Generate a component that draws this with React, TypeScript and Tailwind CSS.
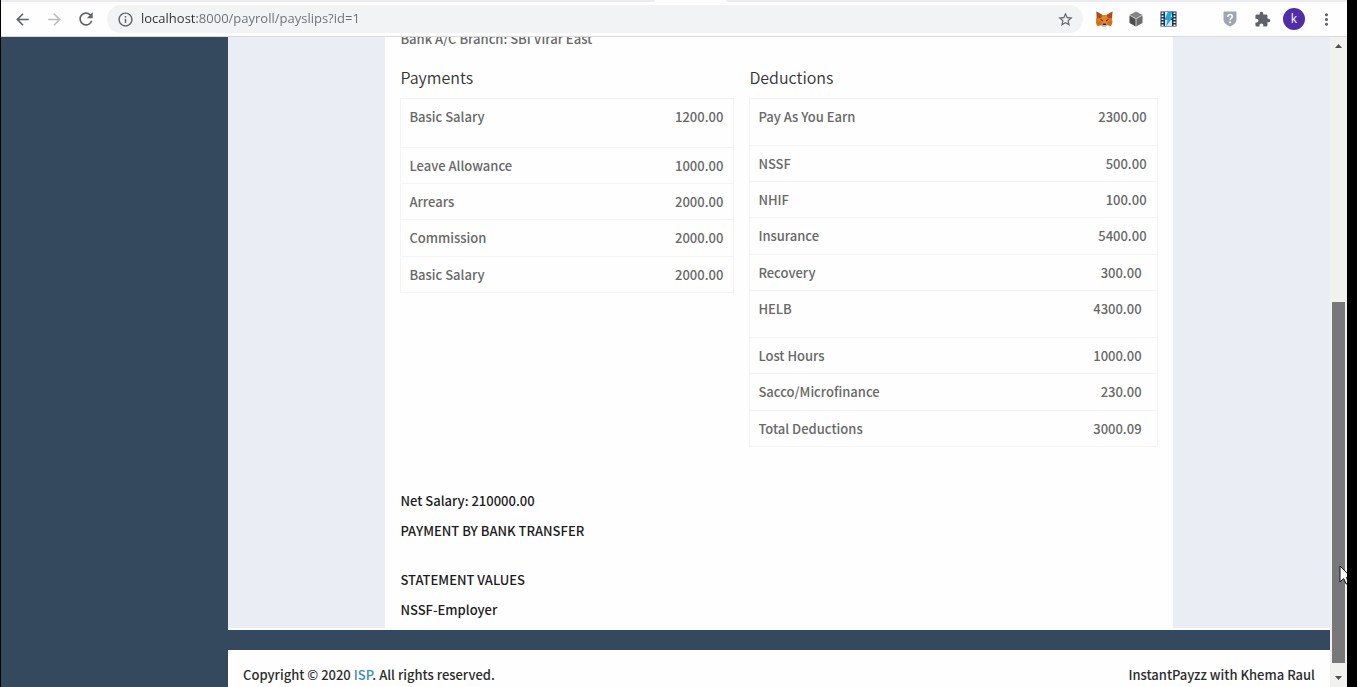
import type { ReactNode } from "react";
import {
  MdArrowBack,
  MdArrowForward,
  MdExtension,
  MdInfoOutline,
  MdMoreVert,
  MdRefresh,
  MdStarBorder,
} from "react-icons/md";

type Line = { label: string; amount: string; height?: string; inset?: boolean };

const payments: Line[] = [
  { label: "Basic Salary", amount: "1200.00", height: "h-12" },
  { label: "Leave Allowance", amount: "1000.00" },
  { label: "Arrears", amount: "2000.00" },
  { label: "Commission", amount: "2000.00" },
  { label: "Basic Salary", amount: "2000.00" },
];

const deductions: Line[] = [
  { label: "Pay As You Earn", amount: "2300.00", height: "h-[46px]" },
  { label: "NSSF", amount: "500.00" },
  { label: "NHIF", amount: "100.00" },
  { label: "Insurance", amount: "5400.00" },
  { label: "Recovery", amount: "300.00", inset: true },
  { label: "HELB", amount: "4300.00", height: "h-[46px]", inset: true },
  { label: "Lost Hours", amount: "1000.00", inset: true },
  { label: "Sacco/Microfinance", amount: "230.00", inset: true },
  { label: "Total Deductions", amount: "3000.09", inset: true },
];

function FoxIcon() {
  return (
    <svg width="17" height="16" viewBox="0 0 34 32" aria-hidden="true">
      <path d="M1 1l12 7h8l12-7-2 12 2 8-3 9-8-2-3 3h-6l-3-3-8 2-3-9 2-8z" fill="#e07b22" />
      <path d="M1 1l12 7-3 6-8 1zM33 1l-12 7 3 6 8 1z" fill="#a8501c" />
      <path d="M13 8h8l3 11-3 7h-8l-3-7z" fill="#ea8429" />
      <path d="M8 16l6 2-1 3zM26 16l-6 2 1 3z" fill="#3b2a22" />
      <path d="M1 21h8l2 7-7 2zM33 21h-8l-2 7 7 2z" fill="#d56a18" />
      <path d="M13 25h8l2 3-3 3h-6l-3-3z" fill="#c9bdb0" />
      <path d="M14 25h6l1 3h-8z" fill="#2a2a30" />
    </svg>
  );
}

function CubeIcon() {
  return (
    <svg width="14" height="16" viewBox="0 0 28 32" aria-hidden="true">
      <path d="M14 1l13 7-13 7L1 8z" fill="#858585" />
      <path d="M1 9l12.500 7v15L1 24z" fill="#4e4e4e" />
      <path d="M27 9l-12.500 7v15L27 24z" fill="#6b6b6b" />
      <path d="M1 8l13 7.500L27 8M14 15.500V31" stroke="#b5b5b5" strokeWidth="1.200" fill="none" />
    </svg>
  );
}

function FilmIcon() {
  return (
    <svg width="17" height="16" viewBox="0 0 34 32" aria-hidden="true">
      <path d="M1 1h32v30H1z" fill="#1b3155" />
      <path d="M10 2h14v12H10zM10 18h14v12H10z" fill="#cfe8f4" />
      <path
        d="M3 3h4v3H3zM3 9h4v3H3zM3 15h4v3H3zM3 21h4v3H3zM3 27h4v3H3zM27 3h4v3h-4zM27 9h4v3h-4zM27 15h4v3h-4zM27 21h4v3h-4zM27 27h4v3h-4z"
        fill="#fff"
      />
      <path d="M16 1h9l-4 11h5L12 31l3-13H9z" fill="#28a3dc" />
    </svg>
  );
}

function ShieldIcon() {
  return (
    <svg width="14" height="16" viewBox="0 0 28 32" aria-hidden="true">
      <path d="M3 1h22c1.500 0 2 1 2 2v13c0 8-6 12-13 15C7 28 1 24 1 16V3c0-1 .500-2 2-2z" fill="#9ea5b3" />
      <path
        d="M9.500 12c0-6.500 9-6.500 9-1 0 3.500-4.300 3.500-4.300 7.500"
        stroke="#fff"
        strokeWidth="3.200"
        fill="none"
      />
      <circle cx="14.200" cy="22.500" r="2" fill="#fff" />
    </svg>
  );
}

function ToolButton({ label, children }: { label: string; children: ReactNode }) {
  return (
    <button type="button" aria-label={label} className="flex size-8 items-center justify-center">
      {children}
    </button>
  );
}

function Toolbar() {
  return (
    <header className="shrink-0 border-b border-[#d8dade] bg-[#fefefe]">
      <div className="flex h-0.5">
        <div className="w-[654px] rounded-br bg-[#ebebf1]" />
        <div className="w-[71px]" />
        <div className="flex-1 rounded-bl bg-[#ebebf1]" />
      </div>
      <div className="flex h-[34px] items-center pl-[5px] text-[#5f6368]">
        <ToolButton label="Back">
          <MdArrowBack size={19} />
        </ToolButton>
        <span className="flex text-[#babcbe]">
          <ToolButton label="Forward">
            <MdArrowForward size={19} />
          </ToolButton>
        </span>
        <ToolButton label="Reload">
          <MdRefresh size={20} />
        </ToolButton>
        <div className="ml-[5px] flex h-7 flex-1 items-center rounded-full bg-[#f1f3f4] pr-0.5 pl-2.5">
          <MdInfoOutline size={17} className="shrink-0" />
          <input
            aria-label="Address"
            defaultValue="localhost:8000/payroll/payslips?id=1"
            className="ml-[7px] min-w-0 flex-1 bg-[linear-gradient(90deg,#303134_56px,#6b6f74_56px)] bg-clip-text font-['Open_Sans',sans-serif] text-[13px] text-transparent outline-none"
          />
          <ToolButton label="Bookmark">
            <MdStarBorder size={17} />
          </ToolButton>
        </div>
        <div className="flex items-center px-[5px]">
          <ToolButton label="Wallet">
            <FoxIcon />
          </ToolButton>
          <ToolButton label="Blocks">
            <CubeIcon />
          </ToolButton>
          <ToolButton label="Video">
            <FilmIcon />
          </ToolButton>
          <span className="w-[30px]" />
          <ToolButton label="Protection">
            <ShieldIcon />
          </ToolButton>
          <ToolButton label="Extensions">
            <MdExtension size={17} />
          </ToolButton>
          <ToolButton label="Profile">
            <span className="flex size-[22px] items-center justify-center rounded-full bg-[#512da8] font-['Open_Sans',sans-serif] text-xs text-white">
              k
            </span>
          </ToolButton>
          <ToolButton label="Menu">
            <MdMoreVert size={19} />
          </ToolButton>
        </div>
      </div>
    </header>
  );
}

function LineTable({ title, lines, className }: { title: string; lines: Line[]; className: string }) {
  return (
    <section>
      <h2 className="mb-[11px] text-base leading-5 font-[350] text-[#333]">{title}</h2>
      <table
        className={`w-full border-collapse border border-[#f4f4f4] text-[13px] leading-5 font-medium text-[#686868] ${className}`}
      >
        <tbody>
          {lines.map((line, i) => (
            <tr key={i} className={line.height ?? "h-9"}>
              <th
                scope="row"
                className="border-b border-[#f4f4f4] pt-2 pb-1.5 pl-2 text-left align-top font-medium"
              >
                {line.label}
              </th>
              <td
                className={`border-b border-[#f4f4f4] pt-2 pb-1.5 text-right align-top ${line.inset ? "pr-[15px]" : "pr-2.5"}`}
              >
                {line.amount}
              </td>
            </tr>
          ))}
        </tbody>
      </table>
    </section>
  );
}

function Payslip() {
  return (
    <main className="flex min-h-0 flex-1 justify-center border-b-2 border-[#fafbfc] bg-[#eaedf3]">
      <article className="w-5/7 overflow-hidden bg-[#fefefe] px-[15px]">
        <p className="-mt-2 mb-[18px] text-[13px] leading-5 font-medium text-[#686868]">
          Bank A/C Branch: SBI Virar East
        </p>
        <div className="grid grid-cols-[45fr_55fr] items-start gap-[15px]">
          <LineTable title="Payments" lines={payments} className="h-[195px]" />
          <LineTable title="Deductions" lines={deductions} className="h-[349px]" />
        </div>
        <div className="mt-11 flex flex-col gap-2.5 text-[13px] leading-5 font-medium text-[#1c1c1c]">
          <p>Net Salary: 210000.00</p>
          <p>PAYMENT BY BANK TRANSFER</p>
          <p className="mt-[19px]">STATEMENT VALUES</p>
          <p>NSSF-Employer</p>
        </div>
      </article>
    </main>
  );
}

function Scrollbar() {
  return (
    <div className="flex w-[17px] shrink-0 flex-col items-center bg-[#f1f1f0]" aria-hidden="true">
      <svg width="17" height="17" viewBox="0 0 17 17">
        <path d="M5 11h7L8.500 7z" fill="#505050" />
      </svg>
      <div className="flex w-[13px] flex-1 flex-col">
        <div className="flex-[248]" />
        <div className="flex-[361] bg-[#787878]" />
        <div className="flex-[7]" />
      </div>
      <svg width="17" height="17" viewBox="0 0 17 17">
        <path d="M5 6h7l-3.500 4z" fill="#505050" />
      </svg>
    </div>
  );
}

export default function App() {
  return (
    <div className="relative h-screen overflow-hidden bg-black pr-2.5 pl-px">
      <div className="flex h-full flex-col font-['Noto_Sans_CJK_SC',sans-serif]">
        <Toolbar />
        <div className="flex min-h-0 flex-1">
          <aside className="w-[227px] shrink-0 bg-[#34495e]" />
          <div className="flex min-w-0 flex-1 flex-col">
            <Payslip />
            <div className="h-5 shrink-0 bg-[#34495e]" />
            <footer className="flex h-[37px] shrink-0 justify-between bg-[#fefefe] px-[15px] pt-[15px] text-[13px] leading-5 font-medium text-[#2c2c2c]">
              <p>
                Copyright © 2020{" "}
                <a href="#isp" className="text-[#3c8dbc]">
                  ISP
                </a>
                . All rights reserved.
              </p>
              <p>InstantPayzz with Khema Raul</p>
            </footer>
          </div>
          <Scrollbar />
        </div>
      </div>
      <div className="absolute top-[565px] right-2.5 w-2 overflow-hidden">
        <svg width="13" height="20" viewBox="0 0 13 20" aria-hidden="true">
          <path d="M1 1v16l3.700-3.500 2.500 5.500 2.600-1.200-2.400-5.300h5z" fill="#fff" stroke="#111" />
        </svg>
      </div>
    </div>
  );
}
